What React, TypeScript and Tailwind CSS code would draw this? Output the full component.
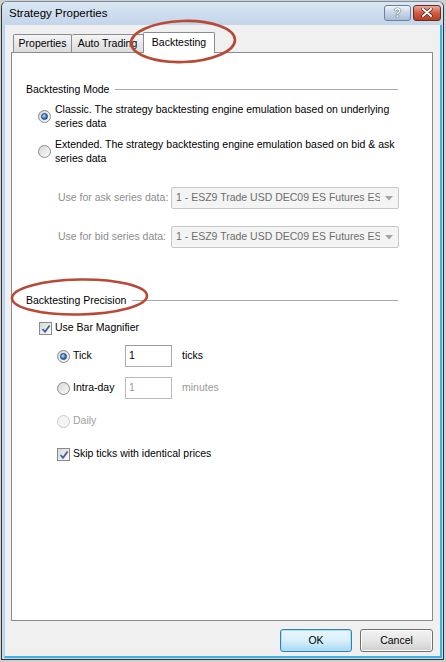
import React from "react";

function Radio({ checked = false, disabled = false }: { checked?: boolean; disabled?: boolean }) {
  return (
    <span
      className={
        disabled
          ? "relative inline-block w-[13px] h-[13px] rounded-full border border-[#c9c9c9] bg-[#f4f4f4] shrink-0"
          : "relative inline-block w-[13px] h-[13px] rounded-full border border-[#8a8a8a] bg-gradient-to-br from-[#d6d6d6] to-[#fbfbfb] shrink-0"
      }
    >
      {checked && (
        <span className="absolute left-[2px] top-[2px] w-[7px] h-[7px] rounded-full border border-[#1d3a6b] bg-[radial-gradient(circle_at_35%_35%,#b9e4ff_0%,#3b8ad4_50%,#173f79_100%)]" />
      )}
    </span>
  );
}

function Check() {
  return (
    <span className="relative inline-block w-[13px] h-[13px] border border-[#8a8a8a] bg-gradient-to-br from-[#d8d8d8] to-[#fbfbfb] shrink-0">
      <svg className="absolute left-[1px] top-[1px]" width="10" height="10" viewBox="0 0 10 10">
        <path d="M1.5 5 L4 7.8 L8.6 1.5" fill="none" stroke="#4a5f97" strokeWidth="1.8" />
      </svg>
    </span>
  );
}

function GroupHeader({ text }: { text: string }) {
  return (
    <div className="flex items-center h-[14px]">
      <span className="text-black leading-[14px] whitespace-nowrap">{text}</span>
      <div className="flex-1 h-px bg-[#a8a8a8] ml-[6px]" />
    </div>
  );
}

function Combo() {
  return (
    <div className="relative w-[228px] h-[22px] border border-[#c7c7c7] rounded-[2px] bg-[#f4f4f4] flex items-center overflow-hidden shrink-0">
      <span className="pl-[4px] text-[#6d6d6d] whitespace-nowrap w-[208px] overflow-hidden">1 - ESZ9 Trade USD DEC09 ES Futures ES</span>
      <svg className="absolute right-[5px] top-[8px]" width="8" height="5" viewBox="0 0 8 5">
        <path d="M0 0 L8 0 L4 4.5 Z" fill="#a5a5a5" />
      </svg>
    </div>
  );
}

export default function App() {
  return (
    <div className="relative w-[446px] h-[662px] overflow-hidden bg-[#cfcfcf] pl-[1px] pt-[1px] font-['Liberation_Sans',Arial,sans-serif] text-[10.5px]">
      {/* window */}
      <div className="w-[443px] h-[659px] border border-[#333] border-t-[#7f8b99] rounded-t-[6px] flex flex-col bg-[#c7d8ec] overflow-hidden">
        {/* title bar */}
        <div className="h-[23px] flex items-center bg-gradient-to-b from-[#dae6f3] to-[#c3d5ea] relative">
          <span className="pl-[7px] text-[11.5px] text-black">Strategy Properties</span>
          <div className="ml-auto flex gap-[2px] mr-[2px] mt-[-2px]">
            <div className="w-[27px] h-[16px] rounded-[3px] border border-[#6f7f96] bg-gradient-to-b from-[#eef3f9] via-[#c8d6e8] to-[#a9bdd8] flex items-center justify-center">
              <span className="text-white font-bold text-[12px] leading-none [text-shadow:0_0_1px_#2a3a55,0_0_1px_#2a3a55]">?</span>
            </div>
            <div className="w-[28px] h-[16px] rounded-[3px] border border-[#6b2a1e] bg-gradient-to-b from-[#e9a897] via-[#cf5a40] to-[#b93e23] flex items-center justify-center">
              <svg width="12" height="9" viewBox="0 0 12 9">
                <path d="M2 1 L10 8 M10 1 L2 8" stroke="#3b1a14" strokeWidth="3.2" strokeLinecap="round" />
                <path d="M2 1 L10 8 M10 1 L2 8" stroke="#ffffff" strokeWidth="2" strokeLinecap="round" />
              </svg>
            </div>
          </div>
        </div>
        {/* content */}
        <div className="flex-1 flex flex-col bg-[#f0f0f0] ml-[2px] mr-[1px] mb-[1px] border-l border-l-[#a8d3f0] border-r-2 border-r-[#39b2e5] border-b-2 border-b-[#39b2e5]">
          {/* tabs */}
          <div className="mt-[7px] ml-[6px] mr-[7px] flex flex-col">
            <div className="flex items-end h-[20px] pl-[2px]">
              <div className="h-[18px] w-[59px] border border-b-0 border-[#898c95] rounded-t-[2px] bg-gradient-to-b from-[#f5f5f5] to-[#dcdcdc] flex items-center justify-center text-black whitespace-nowrap">Properties</div>
              <div className="h-[18px] w-[72px] border border-b-0 border-l-0 border-[#898c95] rounded-t-[2px] bg-gradient-to-b from-[#f5f5f5] to-[#dcdcdc] flex items-center justify-center text-black whitespace-nowrap">Auto Trading</div>
              <div className="relative z-10 -mb-px h-[21px] w-[72px] -ml-px border border-b-0 border-[#898c95] rounded-t-[2px] bg-white flex items-center justify-center text-black whitespace-nowrap">Backtesting</div>
            </div>
            {/* panel */}
            <div className="h-[569px] border border-[#898c95] bg-white pl-[14px] pr-[34px] pt-[29px] flex flex-col">
              <GroupHeader text="Backtesting Mode" />
              <div className="mt-[6px] ml-[12px] flex items-center gap-[4px]">
                <Radio checked />
                <span className="leading-[14px] text-black whitespace-nowrap">Classic. The strategy backtesting engine emulation based on underlying<br />series data</span>
              </div>
              <div className="mt-[7px] ml-[12px] flex items-center gap-[4px]">
                <Radio />
                <span className="leading-[14px] text-black whitespace-nowrap">Extended. The strategy backtesting engine emulation based on bid &amp; ask<br />series data</span>
              </div>
              <div className="mt-[22px] ml-[32px] flex items-center h-[22px]">
                <span className="w-[113px] shrink-0 text-[#8d8d8d] whitespace-nowrap">Use for ask series data:</span>
                <Combo />
              </div>
              <div className="mt-[17px] ml-[32px] flex items-center h-[22px]">
                <span className="w-[113px] shrink-0 text-[#8d8d8d] whitespace-nowrap">Use for bid series data:</span>
                <Combo />
              </div>
              <div className="mt-[45px]">
                <GroupHeader text="Backtesting Precision" />
              </div>
              <div className="mt-[14px] ml-[13px] flex items-center gap-[3px] h-[14px]">
                <Check />
                <span className="text-black">Use Bar Magnifier</span>
              </div>
              <div className="mt-[10px] ml-[31px] flex items-center h-[22px]">
                <Radio checked />
                <span className="ml-[3px] w-[52px] text-black">Tick</span>
                <div className="w-[47px] h-[22px] border border-[#abadb3] border-t-[#9a9ca3] bg-white pl-[3px] pt-[2px] text-black">1</div>
                <span className="ml-[10px] text-black">ticks</span>
              </div>
              <div className="mt-[10px] ml-[31px] flex items-center h-[22px]">
                <Radio />
                <span className="ml-[3px] w-[52px] text-black">Intra-day</span>
                <div className="w-[47px] h-[22px] border border-[#b9b9b9] bg-white pl-[3px] pt-[2px] text-[#9a9a9a]">1</div>
                <span className="ml-[10px] text-[#9a9a9a]">minutes</span>
              </div>
              <div className="mt-[15px] ml-[31px] flex items-center h-[14px]">
                <Radio disabled />
                <span className="ml-[3px] text-[#a0a0a0]">Daily</span>
              </div>
              <div className="mt-[19px] ml-[31px] flex items-center gap-[3px] h-[14px]">
                <Check />
                <span className="text-black">Skip ticks with identical prices</span>
              </div>
            </div>
          </div>
          {/* buttons */}
          <div className="mt-[8px] mr-[7px] flex justify-end gap-[8px]">
            <div className="w-[72px] h-[23px] rounded-[3px] border border-[#3c7fb1] bg-gradient-to-b from-[#eaf6fd] via-[#d9f0fc] to-[#a7d9f5] shadow-[inset_0_0_0_1px_#9fe2ff] flex items-center justify-center text-black">OK</div>
            <div className="w-[73px] h-[23px] rounded-[3px] border border-[#707070] bg-gradient-to-b from-[#f2f2f2] via-[#e6e6e6] to-[#cfcfcf] shadow-[inset_0_0_0_1px_#fcfcfc] flex items-center justify-center text-black">Cancel</div>
          </div>
        </div>
      </div>
      {/* red annotation ellipses */}
      <svg className="absolute left-0 top-0 pointer-events-none" width="446" height="662" viewBox="0 0 446 662">
        <ellipse cx="183" cy="41.5" rx="52" ry="20.5" fill="none" stroke="#b84a35" strokeWidth="2.6" transform="rotate(-2 183 41.5)" />
        <ellipse cx="79.5" cy="297" rx="67.5" ry="17.5" fill="none" stroke="#b84a35" strokeWidth="2.6" transform="rotate(-1 79.5 297)" />
      </svg>
    </div>
  );
}
